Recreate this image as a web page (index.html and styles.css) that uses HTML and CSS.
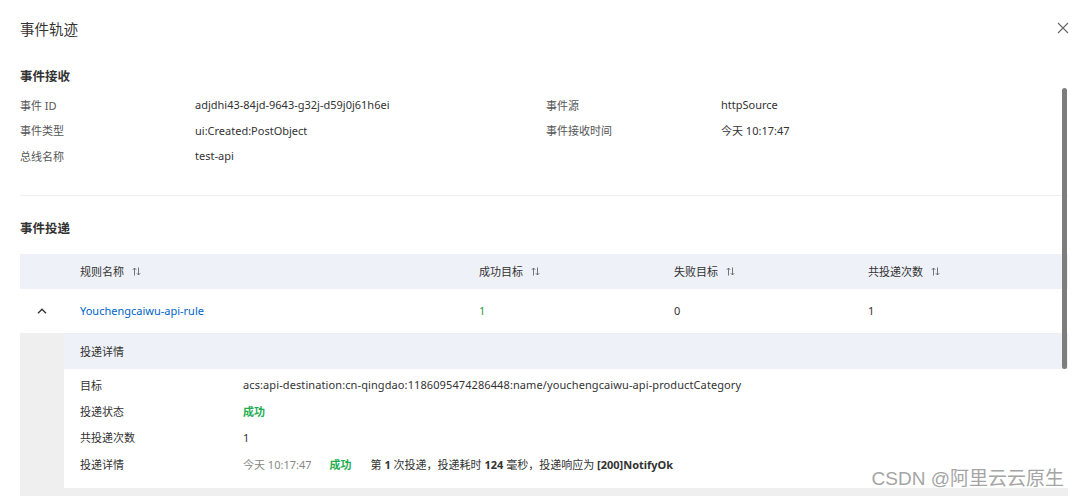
FILE: index.html
```html
<!DOCTYPE html>
<html lang="zh-CN">
<head>
<meta charset="utf-8">
<title>事件轨迹</title>
<link rel="stylesheet" href="styles.css">
</head>
<body>
<div class="drawer">
  <div class="drawer-header">
    <div class="drawer-title">事件轨迹</div>
    <svg class="close" width="12" height="12" viewBox="0 0 12 12"><path d="M1 1L11 11M11 1L1 11" stroke="#666" stroke-width="1.1" fill="none"/></svg>
  </div>
  <div class="drawer-body">
    <div class="section-title first">事件接收</div>
    <div class="info-grid">
      <div class="info-item"><span class="label">事件 ID</span><span class="value">adjdhi43-84jd-9643-g32j-d59j0j61h6ei</span></div>
      <div class="info-item"><span class="label">事件源</span><span class="value">httpSource</span></div>
      <div class="info-item"><span class="label">事件类型</span><span class="value">ui:Created:PostObject</span></div>
      <div class="info-item"><span class="label">事件接收时间</span><span class="value">今天 10:17:47</span></div>
      <div class="info-item"><span class="label">总线名称</span><span class="value">test-api</span></div>
    </div>
    <div class="divider"></div>
    <div class="section-title">事件投递</div>
    <div class="table">
      <div class="thead trow">
        <div class="cell"></div>
        <div class="cell">规则名称<svg class="sort" width="9" height="9" viewBox="0 0 9 9"><path d="M2.5 8.5V1M0.8 2.8L2.5 1L4.2 2.8M6.5 0.5V8M4.8 6.2L6.5 8L8.2 6.2" stroke="#666" stroke-width="0.9" fill="none"/></svg></div>
        <div class="cell">成功目标<svg class="sort" width="9" height="9" viewBox="0 0 9 9"><path d="M2.5 8.5V1M0.8 2.8L2.5 1L4.2 2.8M6.5 0.5V8M4.8 6.2L6.5 8L8.2 6.2" stroke="#666" stroke-width="0.9" fill="none"/></svg></div>
        <div class="cell">失败目标<svg class="sort" width="9" height="9" viewBox="0 0 9 9"><path d="M2.5 8.5V1M0.8 2.8L2.5 1L4.2 2.8M6.5 0.5V8M4.8 6.2L6.5 8L8.2 6.2" stroke="#666" stroke-width="0.9" fill="none"/></svg></div>
        <div class="cell">共投递次数<svg class="sort" width="9" height="9" viewBox="0 0 9 9"><path d="M2.5 8.5V1M0.8 2.8L2.5 1L4.2 2.8M6.5 0.5V8M4.8 6.2L6.5 8L8.2 6.2" stroke="#666" stroke-width="0.9" fill="none"/></svg></div>
      </div>
      <div class="tbody-row trow">
        <div class="cell expand"><svg width="10" height="6" viewBox="0 0 10 6"><path d="M1 5.2L5 1.2L9 5.2" stroke="#333" stroke-width="1.4" fill="none"/></svg></div>
        <div class="cell"><a class="link">Youchengcaiwu-api-rule</a></div>
        <div class="cell green">1</div>
        <div class="cell">0</div>
        <div class="cell">1</div>
      </div>
      <div class="expanded">
        <div class="detail-panel">
          <div class="detail-head">投递详情</div>
          <div class="detail-rows">
            <div class="detail-row"><span class="dlabel">目标</span><span class="value target">acs:api-destination:cn-qingdao:1186095474286448:name/youchengcaiwu-api-productCategory</span></div>
            <div class="detail-row"><span class="dlabel">投递状态</span><span class="success">成功</span></div>
            <div class="detail-row"><span class="dlabel">共投递次数</span><span class="value">1</span></div>
            <div class="detail-row"><span class="dlabel">投递详情</span><span class="time">今天 10:17:47</span><span class="success">成功</span><span class="value">第 <b>1</b> 次投递，投递耗时 <b>124</b> 毫秒，投递响应为 <b>[200]NotifyOk</b></span></div>
          </div>
        </div>
      </div>
    </div>
  </div>
  <div class="scrollbar"></div>
  <div class="watermark">CSDN @阿里云云原生</div>
</div>
</body>
</html>
```

FILE: styles.css
```css
* { box-sizing: border-box; }
html, body { margin: 0; padding: 0; background: #fff; }
body {
  font-family: "Noto Sans", "Noto Sans CJK SC", sans-serif;
  font-size: 11px;
  color: #333;
  width: 1080px;
  height: 496px;
  overflow: hidden;
}
.drawer { position: relative; width: 1080px; height: 496px; }
.drawer-header {
  height: 56px;
  display: flex;
  align-items: center;
  justify-content: space-between;
  padding: 0 11px 0 20px;
}
.drawer-title { font-size: 14.5px; color: #333; }
.close { display: block; }
.drawer-body { padding: 0 12px 0 20px; }
.section-title {
  font-size: 12.5px;
  font-weight: bold;
  line-height: 20px;
  color: #333;
  margin-top: 23px;
}
.section-title.first { margin-top: 11px; }
.info-grid {
  display: grid;
  grid-template-columns: 526px 1fr;
  margin-top: 5px;
}
.info-item { display: flex; align-items: center; height: 25.5px; }
.label { width: 175px; color: #555; flex: none; }
.value { color: #333; }
.target { letter-spacing: 0.1px; }
.divider { height: 1px; background: #efefef; margin-top: 26px; }
.table { margin-top: 15px; }
.trow {
  display: grid;
  grid-template-columns: 44px 399px 195px 194px 1fr;
  align-items: center;
}
.thead { height: 35px; background: #eef1f7; color: #333; }
.cell { padding-left: 16px; display: flex; align-items: center; }
.sort { margin-left: 8px; }
.tbody-row { height: 44px; background: #fff; }
.cell.expand { padding-left: 17px; }
.link { color: #0064c8; text-decoration: none; }
.green { color: #2a9a4a; }
.expanded {
  background: #efefef;
  padding: 1px 0 8px 44px;
}
.detail-panel { background: #fff; }
.detail-head {
  height: 35px;
  background: #eef1f7;
  display: flex;
  align-items: center;
  padding-left: 16px;
}
.detail-rows { padding: 3px 0 11px 16px; }
.detail-row { display: flex; align-items: center; height: 26.3px; }
.dlabel { width: 163px; flex: none; color: #333; }
.success { color: #1fae52; font-weight: bold; margin-right: 19px; }
.time { color: #888; margin-right: 18px; }
.scrollbar {
  position: absolute;
  left: 1062px;
  top: 88px;
  width: 5px;
  height: 281px;
  background: #7d7d7d;
  border-radius: 3px;
}
.watermark {
  position: absolute;
  right: 16px;
  top: 463px;
  font-family: "Liberation Sans", "Noto Sans CJK SC", sans-serif;
  font-size: 19px;
  color: #a5a5a5;
  text-shadow: 0 0 1px #fff, 0 0 2px #fff;
}
```
